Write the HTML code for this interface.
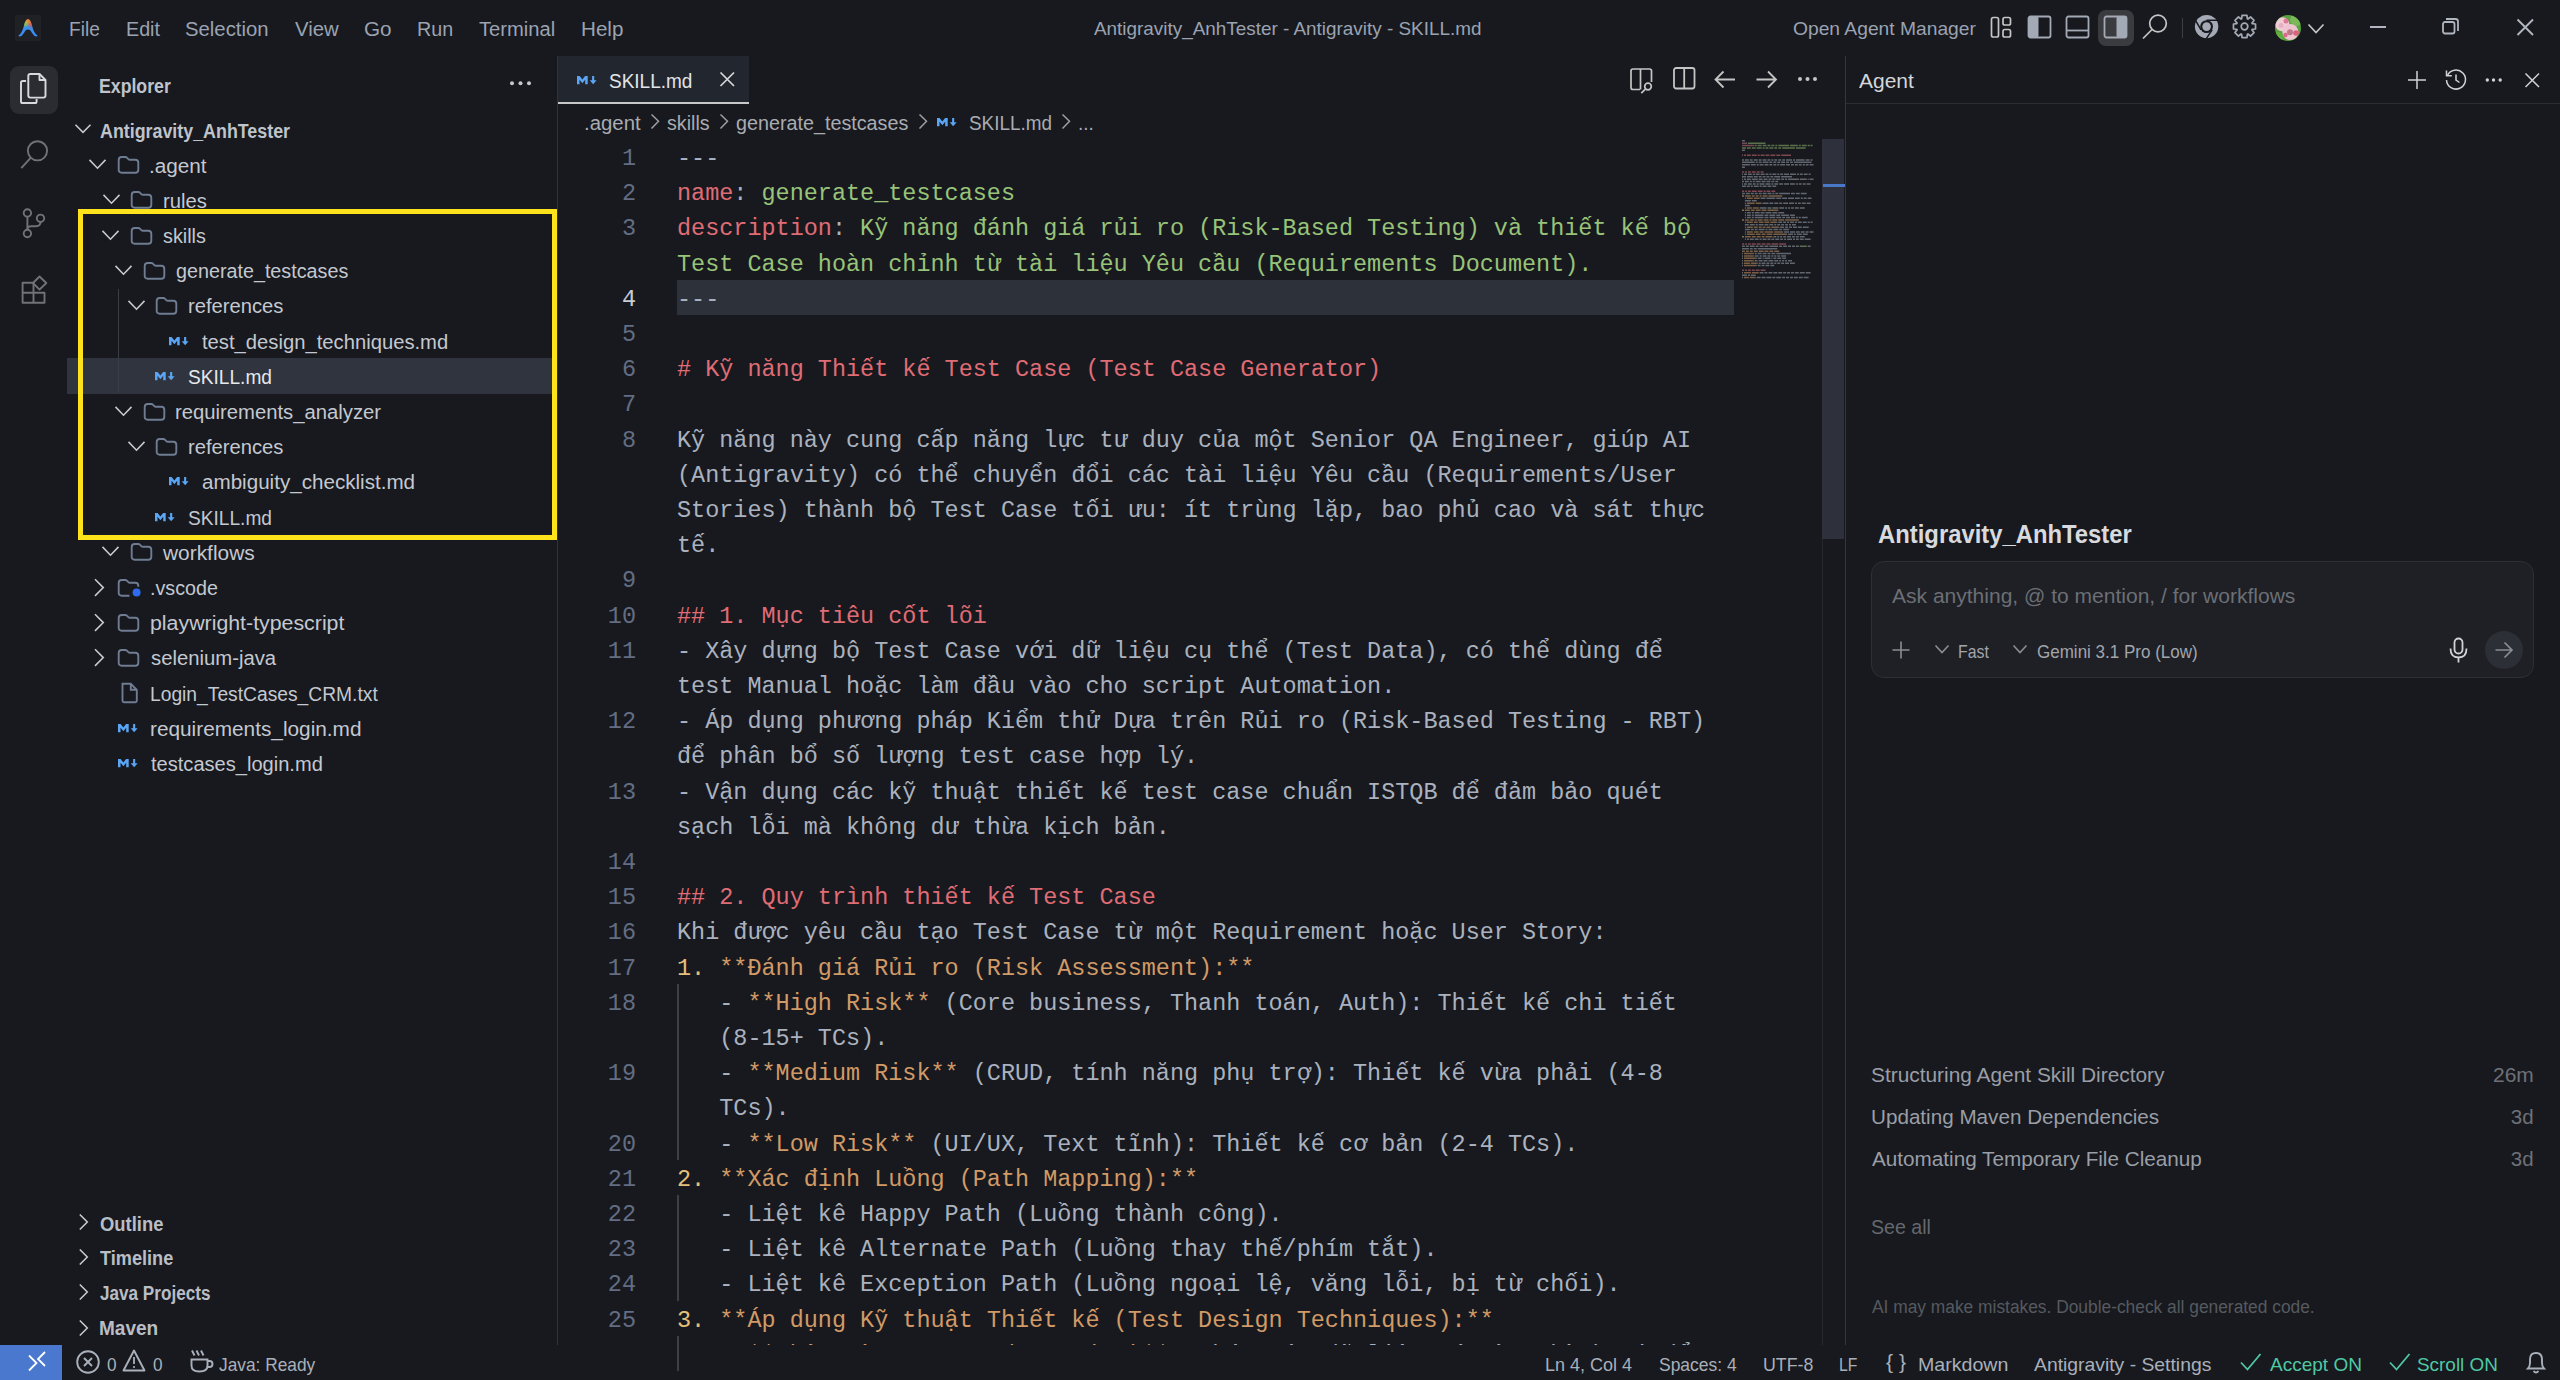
<!DOCTYPE html><html><head><meta charset="utf-8"><style>
*{box-sizing:border-box;margin:0;padding:0}
html,body{width:2560px;height:1380px;overflow:hidden;background:#17191e}
body{position:relative;font-family:"Liberation Sans",sans-serif;color:#cccccc}
.a{position:absolute;white-space:pre;line-height:24px}
svg{position:absolute;overflow:visible}
.menu{font-size:20px;color:#9ba3b2}
.tt{font-size:19px;color:#9ba3b2}
.tree{font-size:20px;color:#c4c8d0}
.bold{font-weight:700}
.chev{stroke:#c8cacf;stroke-width:1.55;fill:none}
.fold{stroke:#6f7c92;stroke-width:1.9;fill:none}
.ico{stroke:#c5c5c5;stroke-width:1.7;fill:none}
.code{font-family:"Liberation Mono",monospace;font-size:23.47px;line-height:35.2px;height:35.2px;color:#abb2bf;padding-top:1.8px}
.ln{font-family:"Liberation Mono",monospace;font-size:23.47px;line-height:35.2px;color:#636d83;width:100px;text-align:right;padding-top:1.8px}
.r{color:#e06c75}.g{color:#98c379}.y{color:#e5c07b}.o{color:#d19a66}.w{color:#abb2bf}
.st{font-size:18.5px;color:#aab0ba}
.bc{font-size:20px;color:#a9acb2}
.hist{font-size:20.5px;color:#9a9ea6}
</style></head><body>
<div class="a" style="left:15px;top:15px;width:26px;height:26px;background:#202125"></div>
<svg style="left:15px;top:15px" width="26" height="26" viewBox="0 0 26 26">
<defs><linearGradient id="lg" gradientUnits="userSpaceOnUse" x1="0" y1="4" x2="0" y2="22"><stop offset="0" stop-color="#f07038"/><stop offset=".2" stop-color="#d0a840"/><stop offset=".42" stop-color="#3a90e8"/><stop offset="1" stop-color="#3a8cff"/></linearGradient>
<radialGradient id="rg1" gradientUnits="userSpaceOnUse" cx="10" cy="8.5" r="4.5"><stop offset="0" stop-color="#90c840" stop-opacity=".9"/><stop offset="1" stop-color="#90c840" stop-opacity="0"/></radialGradient>
<radialGradient id="rg2" gradientUnits="userSpaceOnUse" cx="16.5" cy="9" r="5"><stop offset="0" stop-color="#f04050" stop-opacity=".85"/><stop offset="1" stop-color="#f04050" stop-opacity="0"/></radialGradient></defs>
<path d="M3.4 20.6 C6.5 18.7 8 14.5 9.3 9.5 C10.3 5.5 11.8 3.9 13 3.9 C14.2 3.9 15.7 5.5 16.7 9.5 C18 14.5 19.5 18.7 22.6 20.6 C22.1 21.7 20.6 21.7 19.6 21 C17.6 19.4 16.3 16.6 15 15.1 C14.2 14.2 11.8 14.2 11 15.1 C9.7 16.6 8.4 19.4 6.4 21 C5.4 21.7 3.9 21.7 3.4 20.6 Z" fill="url(#lg)"/><path d="M3.4 20.6 C6.5 18.7 8 14.5 9.3 9.5 C10.3 5.5 11.8 3.9 13 3.9 C14.2 3.9 15.7 5.5 16.7 9.5 C18 14.5 19.5 18.7 22.6 20.6 C22.1 21.7 20.6 21.7 19.6 21 C17.6 19.4 16.3 16.6 15 15.1 C14.2 14.2 11.8 14.2 11 15.1 C9.7 16.6 8.4 19.4 6.4 21 C5.4 21.7 3.9 21.7 3.4 20.6 Z" fill="url(#rg1)"/><path d="M3.4 20.6 C6.5 18.7 8 14.5 9.3 9.5 C10.3 5.5 11.8 3.9 13 3.9 C14.2 3.9 15.7 5.5 16.7 9.5 C18 14.5 19.5 18.7 22.6 20.6 C22.1 21.7 20.6 21.7 19.6 21 C17.6 19.4 16.3 16.6 15 15.1 C14.2 14.2 11.8 14.2 11 15.1 C9.7 16.6 8.4 19.4 6.4 21 C5.4 21.7 3.9 21.7 3.4 20.6 Z" fill="url(#rg2)"/>
</svg>
<div class="a menu" style="left:68.79px;top:17.00px;;transform:scaleX(0.9565);transform-origin:0 0">File</div>
<div class="a menu" style="left:125.51px;top:17.00px;;transform:scaleX(0.9853);transform-origin:0 0">Edit</div>
<div class="a menu" style="left:185.48px;top:17.00px;;transform:scaleX(1.0154);transform-origin:0 0">Selection</div>
<div class="a menu" style="left:295.00px;top:17.00px;;transform:scaleX(1.0174);transform-origin:0 0">View</div>
<div class="a menu" style="left:363.72px;top:17.00px;;transform:scaleX(1.0340);transform-origin:0 0">Go</div>
<div class="a menu" style="left:416.51px;top:17.00px;;transform:scaleX(0.9857);transform-origin:0 0">Run</div>
<div class="a menu" style="left:478.75px;top:17.00px;;transform:scaleX(1.0087);transform-origin:0 0">Terminal</div>
<div class="a menu" style="left:580.87px;top:17.00px;;transform:scaleX(1.0300);transform-origin:0 0">Help</div>
<div class="a tt" style="left:1094.40px;top:16.80px;;transform:scaleX(0.9943);transform-origin:0 0">Antigravity_AnhTester - Antigravity - SKILL.md</div>
<div class="a tt" style="left:1793.30px;top:16.70px;;transform:scaleX(1.0127);transform-origin:0 0">Open Agent Manager</div>
<svg style="left:1990px;top:16px" width="24" height="24"><g class="ico" stroke="#a3a9b5"><rect x="1.5" y="1.5" width="7" height="19.5" rx="1.8"/><rect x="13" y="1.5" width="7.5" height="7.5" rx="1.8"/><rect x="13" y="13.5" width="7.5" height="7.5" rx="1.8"/></g></svg>
<svg style="left:2027px;top:15px" width="26" height="26"><rect x="1.5" y="1.5" width="22" height="21" rx="2" fill="none" stroke="#a3a9b5" stroke-width="1.8"/><rect x="1.5" y="1.5" width="10" height="21" rx="2" fill="#a3a9b5"/></svg>
<svg style="left:2065px;top:15px" width="26" height="26"><rect x="1.5" y="1.5" width="22" height="21" rx="2" fill="none" stroke="#a3a9b5" stroke-width="1.8"/><line x1="1.5" y1="15.5" x2="23.5" y2="15.5" stroke="#a3a9b5" stroke-width="1.8"/></svg>
<div class="a" style="left:2098px;top:10px;width:36px;height:36px;border-radius:8px;background:#3a3b3f"></div>
<svg style="left:2103px;top:15px" width="26" height="26"><rect x="1.5" y="1.5" width="22" height="21" rx="2" fill="none" stroke="#a3a9b5" stroke-width="1.8"/><rect x="13.5" y="1.5" width="10" height="21" rx="2" fill="#a3a9b5"/></svg>
<svg style="left:2140px;top:13px" width="30" height="30"><circle cx="18" cy="10.5" r="8.3" class="ico" stroke="#a3a9b5"/><line x1="12" y1="16.5" x2="3" y2="25.5" class="ico" stroke="#a3a9b5" stroke-width="1.9"/></svg>
<div class="a" style="left:2182px;top:18px;width:1px;height:20px;background:#3b3e44"></div>
<svg style="left:2194px;top:14px" width="26" height="26" viewBox="0 0 26 26"><circle cx="12.6" cy="12.6" r="11.7" fill="#a3a9b5"/><circle cx="12.6" cy="12.6" r="6.4" fill="#17191e"/><circle cx="12.6" cy="12.6" r="4.3" fill="#a3a9b5"/>
<path d="M12.6 6.2 H24 M7.05 15.8 L1.5 6.3 M18.15 15.8 L12.3 24.6" stroke="#17191e" stroke-width="1.5"/></svg>
<svg style="left:2232px;top:14px" width="26" height="26"><polygon points="23.53,10.03 23.53,14.97 20.17,15.39 19.97,15.88 22.04,18.55 18.55,22.04 15.88,19.97 15.39,20.17 14.97,23.53 10.03,23.53 9.61,20.17 9.12,19.97 6.45,22.04 2.96,18.55 5.03,15.88 4.83,15.39 1.47,14.97 1.47,10.03 4.83,9.61 5.03,9.12 2.96,6.45 6.45,2.96 9.12,5.03 9.61,4.83 10.03,1.47 14.97,1.47 15.39,4.83 15.88,5.03 18.55,2.96 22.04,6.45 19.97,9.12 20.17,9.61" fill="none" stroke="#a3a9b5" stroke-width="1.7" stroke-linejoin="round"/><circle cx="12.5" cy="12.5" r="3.3" fill="none" stroke="#a3a9b5" stroke-width="1.7"/></svg>
<svg style="left:2275px;top:15px" width="26" height="26"><defs><clipPath id="avc"><circle cx="13" cy="13" r="13"/></clipPath></defs><g clip-path="url(#avc)"><rect width="26" height="26" fill="#5aa040"/><circle cx="21" cy="5" r="6" fill="#7cb858"/><circle cx="3" cy="22" r="5" fill="#62b040"/><circle cx="7.2" cy="9.2" r="7" fill="#f0ccd6"/><circle cx="6" cy="10.5" r="2.5" fill="#e6b0c0"/><circle cx="11" cy="6" r="2.5" fill="#e07898"/><circle cx="15.3" cy="17" r="8" fill="#efc4d0"/><circle cx="15" cy="17.3" r="3" fill="#c07888"/><circle cx="21" cy="18" r="2.8" fill="#dc6080"/><circle cx="10.5" cy="20" r="2.2" fill="#d86a88"/></g></svg>
<svg style="left:2306.5px;top:22.5px" width="18" height="12"><path d="M1.5 1.5 L9 9.5 L16.5 1.5" class="ico" stroke="#a3a9b5"/></svg>
<div class="a" style="left:2370px;top:26px;width:16px;height:2px;background:#b0b5bf"></div>
<svg style="left:2442px;top:18px" width="18" height="18"><rect x="1" y="4" width="11.5" height="11.5" rx="2" fill="none" stroke="#b0b5bf" stroke-width="1.8"/><path d="M4 1 H13.5 Q16 1 16 3.5 V13" fill="none" stroke="#b0b5bf" stroke-width="1.8"/></svg>
<svg style="left:2517px;top:19px" width="17" height="17"><path d="M0.5 0.5 L16 16 M16 0.5 L0.5 16" stroke="#b0b5bf" stroke-width="1.9"/></svg>
<div class="a" style="left:10px;top:66px;width:48px;height:48px;border-radius:9px;background:#2a2c31"></div>
<svg style="left:20px;top:73px" width="28" height="32"><g fill="none" stroke="#d7d9dd" stroke-width="1.9" stroke-linejoin="round"><path d="M6 8 H2.6 Q1 8 1 9.6 V28.4 Q1 30 2.6 30 H15 Q16.6 30 16.6 28.4 V26"/><path d="M8.3 3 Q8.3 1 10.3 1 H19.5 L25.5 7 V22.6 Q25.5 24.6 23.5 24.6 H10.3 Q8.3 24.6 8.3 22.6 Z"/><path d="M19.5 1.5 V7 H25"/></g></svg>
<svg style="left:20px;top:140px" width="30" height="32"><circle cx="17.5" cy="10.8" r="9.6" fill="none" stroke="#6f7276" stroke-width="1.9"/><line x1="10.6" y1="17.8" x2="1.3" y2="28.2" stroke="#6f7276" stroke-width="1.9"/></svg>
<svg style="left:20px;top:206px" width="30" height="34"><g fill="none" stroke="#6f7276" stroke-width="1.9"><circle cx="7.4" cy="7" r="3.7"/><circle cx="20.5" cy="12.3" r="3.7"/><circle cx="7.4" cy="27.5" r="3.7"/><path d="M7.4 10.7 V23.8"/><path d="M20.5 16 Q20.5 20.2 16 20.2 H11 Q7.4 20.2 7.4 23.5"/></g></svg>
<svg style="left:20px;top:274px" width="30" height="32"><g fill="none" stroke="#6f7276" stroke-width="1.9" stroke-linejoin="round"><path d="M2.6 8.7 H13.5 V28.8 H2.6 Z M2.6 18.7 H24.5 V28.8 H13.5"/><path d="M19.5 2.5 L26.3 9 L19.5 15.6 L13 9 Z"/></g></svg>
<div class="a tree bold" style="left:99.12px;top:73.50px;color:#bfc3cb;transform:scaleX(0.8844);transform-origin:0 0">Explorer</div>
<svg style="left:509px;top:80px" width="24" height="8"><circle cx="3" cy="3.2" r="2" fill="#c4c8d0"/><circle cx="11.5" cy="3.2" r="2" fill="#c4c8d0"/><circle cx="20" cy="3.2" r="2" fill="#c4c8d0"/></svg>
<svg style="left:74px;top:112px" width="20" height="36"><path class="chev" d="M1.5 12.8 L9 20.3 L16.5 12.8"/></svg>
<div class="a tree bold" style="left:99.50px;top:118.50px;color:#bfc3cb;transform:scaleX(0.8920);transform-origin:0 0">Antigravity_AnhTester</div>
<div class="a" style="left:67px;top:358.4px;width:490px;height:35.2px;background:#2f343e"></div>
<svg style="left:88.0px;top:147.2px" width="20" height="36"><path class="chev" d="M1.5 12.9 L9.5 21.2 L17.5 12.9"/></svg>
<svg style="left:116.5px;top:147.2px" width="24" height="36"><path class="fold" d="M4.7 25.7 Q1.7 25.7 1.7 22.7 V13 Q1.7 10 4.7 10 H8.3 Q9.3 10 10.1 10.8 L11.6 12.3 Q12.1 12.8 12.8 12.8 H18.3 Q21.3 12.8 21.3 15.8 V22.7 Q21.3 25.7 18.3 25.7 Z"/></svg>
<div class="a tree" style="left:148.96px;top:153.60px;;transform:scaleX(1.0364);transform-origin:0 0">.agent</div>
<svg style="left:101.8px;top:182.4px" width="20" height="36"><path class="chev" d="M1.5 12.9 L9.5 21.2 L17.5 12.9"/></svg>
<svg style="left:130.2px;top:182.4px" width="24" height="36"><path class="fold" d="M4.7 25.7 Q1.7 25.7 1.7 22.7 V13 Q1.7 10 4.7 10 H8.3 Q9.3 10 10.1 10.8 L11.6 12.3 Q12.1 12.8 12.8 12.8 H18.3 Q21.3 12.8 21.3 15.8 V22.7 Q21.3 25.7 18.3 25.7 Z"/></svg>
<div class="a tree" style="left:162.74px;top:188.80px;;transform:scaleX(1.0119);transform-origin:0 0">rules</div>
<svg style="left:101.0px;top:217.6px" width="20" height="36"><path class="chev" d="M1.5 12.9 L9.5 21.2 L17.5 12.9"/></svg>
<svg style="left:129.5px;top:217.6px" width="24" height="36"><path class="fold" d="M4.7 25.7 Q1.7 25.7 1.7 22.7 V13 Q1.7 10 4.7 10 H8.3 Q9.3 10 10.1 10.8 L11.6 12.3 Q12.1 12.8 12.8 12.8 H18.3 Q21.3 12.8 21.3 15.8 V22.7 Q21.3 25.7 18.3 25.7 Z"/></svg>
<div class="a tree" style="left:163.00px;top:224.00px;;transform:scaleX(0.9907);transform-origin:0 0">skills</div>
<svg style="left:114.1px;top:252.8px" width="20" height="36"><path class="chev" d="M1.5 12.9 L9.5 21.2 L17.5 12.9"/></svg>
<svg style="left:142.6px;top:252.8px" width="24" height="36"><path class="fold" d="M4.7 25.7 Q1.7 25.7 1.7 22.7 V13 Q1.7 10 4.7 10 H8.3 Q9.3 10 10.1 10.8 L11.6 12.3 Q12.1 12.8 12.8 12.8 H18.3 Q21.3 12.8 21.3 15.8 V22.7 Q21.3 25.7 18.3 25.7 Z"/></svg>
<div class="a tree" style="left:176.10px;top:259.20px;;transform:scaleX(0.9868);transform-origin:0 0">generate_testcases</div>
<svg style="left:126.6px;top:288.0px" width="20" height="36"><path class="chev" d="M1.5 12.9 L9.5 21.2 L17.5 12.9"/></svg>
<svg style="left:155.1px;top:288.0px" width="24" height="36"><path class="fold" d="M4.7 25.7 Q1.7 25.7 1.7 22.7 V13 Q1.7 10 4.7 10 H8.3 Q9.3 10 10.1 10.8 L11.6 12.3 Q12.1 12.8 12.8 12.8 H18.3 Q21.3 12.8 21.3 15.8 V22.7 Q21.3 25.7 18.3 25.7 Z"/></svg>
<div class="a tree" style="left:187.59px;top:294.40px;;transform:scaleX(1.0097);transform-origin:0 0">references</div>
<svg style="left:168.5px;top:336.5px" width="20" height="9"><path d="M0 8.3 V0 H2.6 L5.35 3.6 L8.1 0 H10.7 V8.3 H8.2 V3.8 L5.35 7.2 L2.5 3.8 V8.3 Z M15.1 0 H17.2 V4.3 H19.6 L16.15 8.3 L12.7 4.3 H15.1 Z" fill="#5aa5f5"/></svg>
<div class="a tree" style="left:201.70px;top:329.60px;;transform:scaleX(1.0111);transform-origin:0 0">test_design_techniques.md</div>
<svg style="left:155.4px;top:371.7px" width="20" height="9"><path d="M0 8.3 V0 H2.6 L5.35 3.6 L8.1 0 H10.7 V8.3 H8.2 V3.8 L5.35 7.2 L2.5 3.8 V8.3 Z M15.1 0 H17.2 V4.3 H19.6 L16.15 8.3 L12.7 4.3 H15.1 Z" fill="#5aa5f5"/></svg>
<div class="a tree" style="left:187.64px;top:364.80px;color:#e6e8ec;transform:scaleX(0.9558);transform-origin:0 0">SKILL.md</div>
<svg style="left:114.1px;top:393.6px" width="20" height="36"><path class="chev" d="M1.5 12.9 L9.5 21.2 L17.5 12.9"/></svg>
<svg style="left:142.6px;top:393.6px" width="24" height="36"><path class="fold" d="M4.7 25.7 Q1.7 25.7 1.7 22.7 V13 Q1.7 10 4.7 10 H8.3 Q9.3 10 10.1 10.8 L11.6 12.3 Q12.1 12.8 12.8 12.8 H18.3 Q21.3 12.8 21.3 15.8 V22.7 Q21.3 25.7 18.3 25.7 Z"/></svg>
<div class="a tree" style="left:175.09px;top:400.00px;;transform:scaleX(1.0128);transform-origin:0 0">requirements_analyzer</div>
<svg style="left:126.6px;top:428.8px" width="20" height="36"><path class="chev" d="M1.5 12.9 L9.5 21.2 L17.5 12.9"/></svg>
<svg style="left:155.1px;top:428.8px" width="24" height="36"><path class="fold" d="M4.7 25.7 Q1.7 25.7 1.7 22.7 V13 Q1.7 10 4.7 10 H8.3 Q9.3 10 10.1 10.8 L11.6 12.3 Q12.1 12.8 12.8 12.8 H18.3 Q21.3 12.8 21.3 15.8 V22.7 Q21.3 25.7 18.3 25.7 Z"/></svg>
<div class="a tree" style="left:187.59px;top:435.20px;;transform:scaleX(1.0097);transform-origin:0 0">references</div>
<svg style="left:168.5px;top:477.3px" width="20" height="9"><path d="M0 8.3 V0 H2.6 L5.35 3.6 L8.1 0 H10.7 V8.3 H8.2 V3.8 L5.35 7.2 L2.5 3.8 V8.3 Z M15.1 0 H17.2 V4.3 H19.6 L16.15 8.3 L12.7 4.3 H15.1 Z" fill="#5aa5f5"/></svg>
<div class="a tree" style="left:201.70px;top:470.40px;;transform:scaleX(1.0306);transform-origin:0 0">ambiguity_checklist.md</div>
<svg style="left:155.4px;top:512.5px" width="20" height="9"><path d="M0 8.3 V0 H2.6 L5.35 3.6 L8.1 0 H10.7 V8.3 H8.2 V3.8 L5.35 7.2 L2.5 3.8 V8.3 Z M15.1 0 H17.2 V4.3 H19.6 L16.15 8.3 L12.7 4.3 H15.1 Z" fill="#5aa5f5"/></svg>
<div class="a tree" style="left:187.64px;top:505.60px;;transform:scaleX(0.9558);transform-origin:0 0">SKILL.md</div>
<svg style="left:101.0px;top:534.4px" width="20" height="36"><path class="chev" d="M1.5 12.9 L9.5 21.2 L17.5 12.9"/></svg>
<svg style="left:129.5px;top:534.4px" width="24" height="36"><path class="fold" d="M4.7 25.7 Q1.7 25.7 1.7 22.7 V13 Q1.7 10 4.7 10 H8.3 Q9.3 10 10.1 10.8 L11.6 12.3 Q12.1 12.8 12.8 12.8 H18.3 Q21.3 12.8 21.3 15.8 V22.7 Q21.3 25.7 18.3 25.7 Z"/></svg>
<div class="a tree" style="left:163.00px;top:540.80px;;transform:scaleX(1.0443);transform-origin:0 0">workflows</div>
<svg style="left:90.8px;top:569.6px" width="18" height="36"><path class="chev" d="M4 9.3 L12.3 17.6 L4 25.9"/></svg>
<svg style="left:117.3px;top:569.6px" width="26" height="36"><path class="fold" d="M12.5 25.7 H4.7 Q1.7 25.7 1.7 22.7 V13 Q1.7 10 4.7 10 H8.3 Q9.3 10 10.1 10.8 L11.6 12.3 Q12.1 12.8 12.8 12.8 H18.3 Q21.3 12.8 21.3 15.8 V16.8"/><circle cx="19.6" cy="22.6" r="4" fill="#2f6bf0"/></svg>
<div class="a tree" style="left:149.81px;top:576.00px;;transform:scaleX(0.9853);transform-origin:0 0">.vscode</div>
<svg style="left:90.8px;top:604.8px" width="18" height="36"><path class="chev" d="M4 9.3 L12.3 17.6 L4 25.9"/></svg>
<svg style="left:117.3px;top:604.8px" width="24" height="36"><path class="fold" d="M4.7 25.7 Q1.7 25.7 1.7 22.7 V13 Q1.7 10 4.7 10 H8.3 Q9.3 10 10.1 10.8 L11.6 12.3 Q12.1 12.8 12.8 12.8 H18.3 Q21.3 12.8 21.3 15.8 V22.7 Q21.3 25.7 18.3 25.7 Z"/></svg>
<div class="a tree" style="left:149.73px;top:611.20px;;transform:scaleX(1.0665);transform-origin:0 0">playwright-typescript</div>
<svg style="left:90.8px;top:640.0px" width="18" height="36"><path class="chev" d="M4 9.3 L12.3 17.6 L4 25.9"/></svg>
<svg style="left:117.3px;top:640.0px" width="24" height="36"><path class="fold" d="M4.7 25.7 Q1.7 25.7 1.7 22.7 V13 Q1.7 10 4.7 10 H8.3 Q9.3 10 10.1 10.8 L11.6 12.3 Q12.1 12.8 12.8 12.8 H18.3 Q21.3 12.8 21.3 15.8 V22.7 Q21.3 25.7 18.3 25.7 Z"/></svg>
<div class="a tree" style="left:150.80px;top:646.40px;;transform:scaleX(1.0137);transform-origin:0 0">selenium-java</div>
<svg style="left:118.8px;top:675.2px" width="22" height="36"><path class="fold" d="M3.5 8.8 H11.8 L17.8 14.8 V25.8 Q17.8 27.3 16.3 27.3 H5 Q3.5 27.3 3.5 25.8 Z M11.8 9 V14.8 H17.6"/></svg>
<div class="a tree" style="left:149.84px;top:681.60px;;transform:scaleX(0.9619);transform-origin:0 0">Login_TestCases_CRM.txt</div>
<svg style="left:117.6px;top:723.7px" width="20" height="9"><path d="M0 8.3 V0 H2.6 L5.35 3.6 L8.1 0 H10.7 V8.3 H8.2 V3.8 L5.35 7.2 L2.5 3.8 V8.3 Z M15.1 0 H17.2 V4.3 H19.6 L16.15 8.3 L12.7 4.3 H15.1 Z" fill="#5aa5f5"/></svg>
<div class="a tree" style="left:149.76px;top:716.80px;;transform:scaleX(1.0396);transform-origin:0 0">requirements_login.md</div>
<svg style="left:117.6px;top:758.9px" width="20" height="9"><path d="M0 8.3 V0 H2.6 L5.35 3.6 L8.1 0 H10.7 V8.3 H8.2 V3.8 L5.35 7.2 L2.5 3.8 V8.3 Z M15.1 0 H17.2 V4.3 H19.6 L16.15 8.3 L12.7 4.3 H15.1 Z" fill="#5aa5f5"/></svg>
<div class="a tree" style="left:150.80px;top:752.00px;;transform:scaleX(1.0035);transform-origin:0 0">testcases_login.md</div>
<div class="a" style="left:118px;top:289px;width:1px;height:104.4px;background:#3a3d44"></div>
<div class="a" style="left:78px;top:209px;width:479px;height:331px;border:5px solid #fde21c"></div>
<svg style="left:76px;top:1204.0px" width="18" height="36"><path class="chev" d="M3.8 10.5 L11.3 18 L3.8 25.5"/></svg>
<div class="a tree bold" style="left:99.50px;top:1211.50px;color:#b9bdc5;transform:scaleX(0.9203);transform-origin:0 0">Outline</div>
<svg style="left:76px;top:1239.2px" width="18" height="36"><path class="chev" d="M3.8 10.5 L11.3 18 L3.8 25.5"/></svg>
<div class="a tree bold" style="left:99.50px;top:1246.20px;color:#b9bdc5;transform:scaleX(0.9074);transform-origin:0 0">Timeline</div>
<svg style="left:76px;top:1274.4px" width="18" height="36"><path class="chev" d="M3.8 10.5 L11.3 18 L3.8 25.5"/></svg>
<div class="a tree bold" style="left:99.50px;top:1281.20px;color:#b9bdc5;transform:scaleX(0.8566);transform-origin:0 0">Java Projects</div>
<svg style="left:76px;top:1309.6px" width="18" height="36"><path class="chev" d="M3.8 10.5 L11.3 18 L3.8 25.5"/></svg>
<div class="a tree bold" style="left:98.55px;top:1316.20px;color:#b9bdc5;transform:scaleX(0.9508);transform-origin:0 0">Maven</div>
<div class="a" style="left:557px;top:56px;width:1px;height:1289px;background:#303237"></div>
<div class="a" style="left:558px;top:56px;width:191px;height:48px;background:#22262e"></div>
<div class="a" style="left:558px;top:102px;width:191px;height:2px;background:#c8c8c8"></div>
<svg style="left:576.7px;top:75.8px" width="20" height="9"><path d="M0 8.3 V0 H2.6 L5.35 3.6 L8.1 0 H10.7 V8.3 H8.2 V3.8 L5.35 7.2 L2.5 3.8 V8.3 Z M15.1 0 H17.2 V4.3 H19.6 L16.15 8.3 L12.7 4.3 H15.1 Z" fill="#5aa5f5"/></svg>
<div class="a tree" style="left:608.85px;top:69.00px;color:#e2e4e8;transform:scaleX(0.9488);transform-origin:0 0">SKILL.md</div>
<svg style="left:719px;top:71px" width="17" height="17"><path d="M1.5 1.5 L15 15 M15 1.5 L1.5 15" stroke="#d6d8dc" stroke-width="1.7"/></svg>
<svg style="left:1630px;top:68px" width="26" height="26"><g fill="none" stroke="#c5c5c5" stroke-width="1.7"><path d="M10 21.5 H3 Q1 21.5 1 19.5 V3 Q1 1 3 1 H19.5 Q21.5 1 21.5 3 V14"/><path d="M10.5 1 V21.5"/><circle cx="18" cy="18.5" r="3.3"/><path d="M15.6 20.9 L11.3 25.2"/></g></svg>
<svg style="left:1673px;top:67px" width="24" height="24"><g fill="none" stroke="#c5c5c5" stroke-width="1.8"><rect x="1" y="1" width="20.5" height="20.5" rx="2.2"/><path d="M11.2 1 V21.5"/></g></svg>
<svg style="left:1714px;top:70px" width="24" height="20"><path d="M21 9.5 H1.8 M9.5 1.5 L1.5 9.5 L9.5 17.5" fill="none" stroke="#c5c5c5" stroke-width="1.8"/></svg>
<svg style="left:1756px;top:70px" width="24" height="20"><path d="M0.5 9.5 H19.7 M12 1.5 L20 9.5 L12 17.5" fill="none" stroke="#c5c5c5" stroke-width="1.8"/></svg>
<svg style="left:1797px;top:76px" width="24" height="8"><circle cx="3" cy="3" r="2" fill="#c5c5c5"/><circle cx="10.5" cy="3" r="2" fill="#c5c5c5"/><circle cx="18" cy="3" r="2" fill="#c5c5c5"/></svg>
<div class="a bc" style="left:583.78px;top:111.20px;;transform:scaleX(1.0182);transform-origin:0 0">.agent</div>
<svg style="left:650.0px;top:112.5px" width="12" height="22"><path d="M1.5 1.5 L8.5 8.3 L1.5 15.5" fill="none" stroke="#9ca0a6" stroke-width="1.5"/></svg>
<div class="a bc" style="left:667.00px;top:111.20px;;transform:scaleX(0.9826);transform-origin:0 0">skills</div>
<svg style="left:718.8px;top:112.5px" width="12" height="22"><path d="M1.5 1.5 L8.5 8.3 L1.5 15.5" fill="none" stroke="#9ca0a6" stroke-width="1.5"/></svg>
<div class="a bc" style="left:735.75px;top:111.20px;;transform:scaleX(0.9871);transform-origin:0 0">generate_testcases</div>
<svg style="left:917.5px;top:112.5px" width="12" height="22"><path d="M1.5 1.5 L8.5 8.3 L1.5 15.5" fill="none" stroke="#9ca0a6" stroke-width="1.5"/></svg>
<svg style="left:937px;top:118px" width="20" height="9"><path d="M0 8.3 V0 H2.6 L5.35 3.6 L8.1 0 H10.7 V8.3 H8.2 V3.8 L5.35 7.2 L2.5 3.8 V8.3 Z M15.1 0 H17.2 V4.3 H19.6 L16.15 8.3 L12.7 4.3 H15.1 Z" fill="#5aa5f5"/></svg>
<div class="a bc" style="left:968.56px;top:111.20px;;transform:scaleX(0.9448);transform-origin:0 0">SKILL.md</div>
<svg style="left:1061.0px;top:112.5px" width="12" height="22"><path d="M1.5 1.5 L8.5 8.3 L1.5 15.5" fill="none" stroke="#9ca0a6" stroke-width="1.5"/></svg>
<div class="a bc" style="left:1077.80px;top:111.20px;;transform:scaleX(0.9464);transform-origin:0 0">...</div>
<div class="a" style="left:677px;top:280.0px;width:1057px;height:35.2px;background:#2d3139"></div>
<div class="a" style="left:677px;top:984.0px;width:1.5px;height:35.2px;background:#3b3f46"></div>
<div class="a" style="left:677px;top:1019.2px;width:1.5px;height:35.2px;background:#3b3f46"></div>
<div class="a" style="left:677px;top:1054.4px;width:1.5px;height:35.2px;background:#3b3f46"></div>
<div class="a" style="left:677px;top:1089.6px;width:1.5px;height:35.2px;background:#3b3f46"></div>
<div class="a" style="left:677px;top:1124.8px;width:1.5px;height:35.2px;background:#3b3f46"></div>
<div class="a" style="left:677px;top:1195.2px;width:1.5px;height:35.2px;background:#3b3f46"></div>
<div class="a" style="left:677px;top:1230.4px;width:1.5px;height:35.2px;background:#3b3f46"></div>
<div class="a" style="left:677px;top:1265.6px;width:1.5px;height:35.2px;background:#3b3f46"></div>
<div class="a" style="left:677px;top:1336.0px;width:1.5px;height:35.2px;background:#3b3f46"></div>
<div class="a" style="left:558px;top:139.2px;width:1264px;height:1205.6px;overflow:hidden">
<div class="a ln" style="left:-22px;top:0.0px;">1</div>
<div class="a code" style="left:119px;top:0.0px"><span class="w">---</span></div>
<div class="a ln" style="left:-22px;top:35.2px;">2</div>
<div class="a code" style="left:119px;top:35.2px"><span class="r">name</span><span class="w">: </span><span class="g">generate_testcases</span></div>
<div class="a ln" style="left:-22px;top:70.4px;">3</div>
<div class="a code" style="left:119px;top:70.4px"><span class="r">description</span><span class="w">: </span><span class="g">Kỹ năng đánh giá rủi ro (Risk-Based Testing) và thiết kế bộ</span></div>
<div class="a code" style="left:119px;top:105.6px"><span class="g">Test Case hoàn chỉnh từ tài liệu Yêu cầu (Requirements Document).</span></div>
<div class="a ln" style="left:-22px;top:140.8px;color:#c8ccd4">4</div>
<div class="a code" style="left:119px;top:140.8px"><span class="w">---</span></div>
<div class="a ln" style="left:-22px;top:176.0px;">5</div>
<div class="a ln" style="left:-22px;top:211.2px;">6</div>
<div class="a code" style="left:119px;top:211.2px"><span class="r"># Kỹ năng Thiết kế Test Case (Test Case Generator)</span></div>
<div class="a ln" style="left:-22px;top:246.4px;">7</div>
<div class="a ln" style="left:-22px;top:281.6px;">8</div>
<div class="a code" style="left:119px;top:281.6px">Kỹ năng này cung cấp năng lực tư duy của một Senior QA Engineer, giúp AI</div>
<div class="a code" style="left:119px;top:316.8px">(Antigravity) có thể chuyển đổi các tài liệu Yêu cầu (Requirements/User</div>
<div class="a code" style="left:119px;top:352.0px">Stories) thành bộ Test Case tối ưu: ít trùng lặp, bao phủ cao và sát thực</div>
<div class="a code" style="left:119px;top:387.2px">tế.</div>
<div class="a ln" style="left:-22px;top:422.4px;">9</div>
<div class="a ln" style="left:-22px;top:457.6px;">10</div>
<div class="a code" style="left:119px;top:457.6px"><span class="r">## 1. Mục tiêu cốt lõi</span></div>
<div class="a ln" style="left:-22px;top:492.8px;">11</div>
<div class="a code" style="left:119px;top:492.8px">- Xây dựng bộ Test Case với dữ liệu cụ thể (Test Data), có thể dùng để</div>
<div class="a code" style="left:119px;top:528.0px">test Manual hoặc làm đầu vào cho script Automation.</div>
<div class="a ln" style="left:-22px;top:563.2px;">12</div>
<div class="a code" style="left:119px;top:563.2px">- Áp dụng phương pháp Kiểm thử Dựa trên Rủi ro (Risk-Based Testing - RBT)</div>
<div class="a code" style="left:119px;top:598.4px">để phân bổ số lượng test case hợp lý.</div>
<div class="a ln" style="left:-22px;top:633.6px;">13</div>
<div class="a code" style="left:119px;top:633.6px">- Vận dụng các kỹ thuật thiết kế test case chuẩn ISTQB để đảm bảo quét</div>
<div class="a code" style="left:119px;top:668.8px">sạch lỗi mà không dư thừa kịch bản.</div>
<div class="a ln" style="left:-22px;top:704.0px;">14</div>
<div class="a ln" style="left:-22px;top:739.2px;">15</div>
<div class="a code" style="left:119px;top:739.2px"><span class="r">## 2. Quy trình thiết kế Test Case</span></div>
<div class="a ln" style="left:-22px;top:774.4px;">16</div>
<div class="a code" style="left:119px;top:774.4px">Khi được yêu cầu tạo Test Case từ một Requirement hoặc User Story:</div>
<div class="a ln" style="left:-22px;top:809.6px;">17</div>
<div class="a code" style="left:119px;top:809.6px"><span class="y">1.</span> <span class="o">**Đánh giá Rủi ro (Risk Assessment):**</span></div>
<div class="a ln" style="left:-22px;top:844.8px;">18</div>
<div class="a code" style="left:119px;top:844.8px">   - <span class="o">**High Risk**</span> (Core business, Thanh toán, Auth): Thiết kế chi tiết</div>
<div class="a code" style="left:119px;top:880.0px">   (8-15+ TCs).</div>
<div class="a ln" style="left:-22px;top:915.2px;">19</div>
<div class="a code" style="left:119px;top:915.2px">   - <span class="o">**Medium Risk**</span> (CRUD, tính năng phụ trợ): Thiết kế vừa phải (4-8</div>
<div class="a code" style="left:119px;top:950.4px">   TCs).</div>
<div class="a ln" style="left:-22px;top:985.6px;">20</div>
<div class="a code" style="left:119px;top:985.6px">   - <span class="o">**Low Risk**</span> (UI/UX, Text tĩnh): Thiết kế cơ bản (2-4 TCs).</div>
<div class="a ln" style="left:-22px;top:1020.8px;">21</div>
<div class="a code" style="left:119px;top:1020.8px"><span class="y">2.</span> <span class="o">**Xác định Luồng (Path Mapping):**</span></div>
<div class="a ln" style="left:-22px;top:1056.0px;">22</div>
<div class="a code" style="left:119px;top:1056.0px">   - Liệt kê Happy Path (Luồng thành công).</div>
<div class="a ln" style="left:-22px;top:1091.2px;">23</div>
<div class="a code" style="left:119px;top:1091.2px">   - Liệt kê Alternate Path (Luồng thay thế/phím tắt).</div>
<div class="a ln" style="left:-22px;top:1126.4px;">24</div>
<div class="a code" style="left:119px;top:1126.4px">   - Liệt kê Exception Path (Luồng ngoại lệ, văng lỗi, bị từ chối).</div>
<div class="a ln" style="left:-22px;top:1161.6px;">25</div>
<div class="a code" style="left:119px;top:1161.6px"><span class="y">3.</span> <span class="o">**Áp dụng Kỹ thuật Thiết kế (Test Design Techniques):**</span></div>
<div class="a ln" style="left:-22px;top:1196.8px;">26</div>
<div class="a code" style="left:119px;top:1196.8px">   - <span class="o">**Phân vùng tương đương (EP)**</span>: Nhóm các dữ liệu có cùng hành vi để</div>
</div>
<svg style="left:0;top:0" width="2560" height="1380"><path d="M1742.0 140.0h2.9v1.5h-2.9zM1745.9 142.4h1.0v1.5h-1.0zM1752.8 144.8h1.0v1.5h-1.0zM1742.0 149.6h2.9v1.5h-2.9zM1742.0 159.2h2.0v1.5h-2.0zM1744.9 159.2h3.9v1.5h-3.9zM1749.8 159.2h2.9v1.5h-2.9zM1753.8 159.2h3.9v1.5h-3.9zM1758.7 159.2h2.9v1.5h-2.9zM1762.6 159.2h3.9v1.5h-3.9zM1767.5 159.2h2.9v1.5h-2.9zM1771.4 159.2h2.0v1.5h-2.0zM1774.3 159.2h2.9v1.5h-2.9zM1778.3 159.2h2.9v1.5h-2.9zM1782.2 159.2h2.9v1.5h-2.9zM1786.1 159.2h5.9v1.5h-5.9zM1793.0 159.2h2.0v1.5h-2.0zM1795.9 159.2h8.8v1.5h-8.8zM1805.7 159.2h3.9v1.5h-3.9zM1810.6 159.2h2.0v1.5h-2.0zM1742.0 161.6h12.7v1.5h-12.7zM1755.7 161.6h2.0v1.5h-2.0zM1758.7 161.6h2.9v1.5h-2.9zM1762.6 161.6h5.9v1.5h-5.9zM1769.4 161.6h2.9v1.5h-2.9zM1773.4 161.6h2.9v1.5h-2.9zM1777.3 161.6h2.9v1.5h-2.9zM1781.2 161.6h3.9v1.5h-3.9zM1786.1 161.6h2.9v1.5h-2.9zM1790.0 161.6h2.9v1.5h-2.9zM1793.9 161.6h17.6v1.5h-17.6zM1742.0 164.0h7.8v1.5h-7.8zM1750.8 164.0h4.9v1.5h-4.9zM1756.7 164.0h2.0v1.5h-2.0zM1759.6 164.0h3.9v1.5h-3.9zM1764.5 164.0h3.9v1.5h-3.9zM1769.4 164.0h2.9v1.5h-2.9zM1773.4 164.0h2.9v1.5h-2.9zM1777.3 164.0h2.0v1.5h-2.0zM1780.2 164.0h4.9v1.5h-4.9zM1786.1 164.0h3.9v1.5h-3.9zM1791.0 164.0h2.9v1.5h-2.9zM1794.9 164.0h2.9v1.5h-2.9zM1798.8 164.0h2.9v1.5h-2.9zM1802.8 164.0h2.0v1.5h-2.0zM1805.7 164.0h2.9v1.5h-2.9zM1809.6 164.0h3.9v1.5h-3.9zM1742.0 166.4h2.9v1.5h-2.9zM1742.0 173.6h1.0v1.5h-1.0zM1744.0 173.6h2.9v1.5h-2.9zM1747.9 173.6h3.9v1.5h-3.9zM1752.8 173.6h2.0v1.5h-2.0zM1755.7 173.6h3.9v1.5h-3.9zM1760.6 173.6h3.9v1.5h-3.9zM1765.5 173.6h2.9v1.5h-2.9zM1769.4 173.6h2.0v1.5h-2.0zM1772.4 173.6h3.9v1.5h-3.9zM1777.3 173.6h2.0v1.5h-2.0zM1780.2 173.6h2.9v1.5h-2.9zM1784.1 173.6h4.9v1.5h-4.9zM1790.0 173.6h5.9v1.5h-5.9zM1796.9 173.6h2.0v1.5h-2.0zM1799.8 173.6h2.9v1.5h-2.9zM1803.7 173.6h3.9v1.5h-3.9zM1808.6 173.6h2.0v1.5h-2.0zM1742.0 176.0h3.9v1.5h-3.9zM1746.9 176.0h5.9v1.5h-5.9zM1753.8 176.0h3.9v1.5h-3.9zM1758.7 176.0h2.9v1.5h-2.9zM1762.6 176.0h2.9v1.5h-2.9zM1766.5 176.0h2.9v1.5h-2.9zM1770.4 176.0h2.9v1.5h-2.9zM1774.3 176.0h5.9v1.5h-5.9zM1781.2 176.0h10.8v1.5h-10.8zM1742.0 178.4h1.0v1.5h-1.0zM1744.0 178.4h2.0v1.5h-2.0zM1746.9 178.4h3.9v1.5h-3.9zM1751.8 178.4h5.9v1.5h-5.9zM1758.7 178.4h3.9v1.5h-3.9zM1763.6 178.4h3.9v1.5h-3.9zM1768.5 178.4h2.9v1.5h-2.9zM1772.4 178.4h2.9v1.5h-2.9zM1776.3 178.4h3.9v1.5h-3.9zM1781.2 178.4h2.9v1.5h-2.9zM1785.1 178.4h2.0v1.5h-2.0zM1788.1 178.4h10.8v1.5h-10.8zM1799.8 178.4h6.9v1.5h-6.9zM1807.7 178.4h1.0v1.5h-1.0zM1809.6 178.4h3.9v1.5h-3.9zM1742.0 180.8h2.0v1.5h-2.0zM1744.9 180.8h3.9v1.5h-3.9zM1749.8 180.8h2.0v1.5h-2.0zM1752.8 180.8h2.0v1.5h-2.0zM1755.7 180.8h4.9v1.5h-4.9zM1761.6 180.8h3.9v1.5h-3.9zM1766.5 180.8h3.9v1.5h-3.9zM1771.4 180.8h2.9v1.5h-2.9zM1775.3 180.8h2.9v1.5h-2.9zM1742.0 183.2h1.0v1.5h-1.0zM1744.0 183.2h2.9v1.5h-2.9zM1747.9 183.2h3.9v1.5h-3.9zM1752.8 183.2h2.9v1.5h-2.9zM1756.7 183.2h2.0v1.5h-2.0zM1759.6 183.2h4.9v1.5h-4.9zM1765.5 183.2h4.9v1.5h-4.9zM1771.4 183.2h2.0v1.5h-2.0zM1774.3 183.2h3.9v1.5h-3.9zM1779.2 183.2h3.9v1.5h-3.9zM1784.1 183.2h4.9v1.5h-4.9zM1790.0 183.2h4.9v1.5h-4.9zM1795.9 183.2h2.0v1.5h-2.0zM1798.8 183.2h2.9v1.5h-2.9zM1802.8 183.2h2.9v1.5h-2.9zM1806.7 183.2h3.9v1.5h-3.9zM1742.0 185.6h3.9v1.5h-3.9zM1746.9 185.6h2.9v1.5h-2.9zM1750.8 185.6h2.0v1.5h-2.0zM1753.8 185.6h4.9v1.5h-4.9zM1759.6 185.6h2.0v1.5h-2.0zM1762.6 185.6h3.9v1.5h-3.9zM1767.5 185.6h3.9v1.5h-3.9zM1772.4 185.6h3.9v1.5h-3.9zM1742.0 192.8h2.9v1.5h-2.9zM1745.9 192.8h3.9v1.5h-3.9zM1750.8 192.8h2.9v1.5h-2.9zM1754.7 192.8h2.9v1.5h-2.9zM1758.7 192.8h2.9v1.5h-2.9zM1762.6 192.8h3.9v1.5h-3.9zM1767.5 192.8h3.9v1.5h-3.9zM1772.4 192.8h2.0v1.5h-2.0zM1775.3 192.8h2.9v1.5h-2.9zM1779.2 192.8h10.8v1.5h-10.8zM1791.0 192.8h3.9v1.5h-3.9zM1795.9 192.8h3.9v1.5h-3.9zM1800.8 192.8h5.9v1.5h-5.9zM1744.9 197.6h1.0v1.5h-1.0zM1760.6 197.6h4.9v1.5h-4.9zM1766.5 197.6h8.8v1.5h-8.8zM1776.3 197.6h4.9v1.5h-4.9zM1782.2 197.6h4.9v1.5h-4.9zM1788.1 197.6h5.9v1.5h-5.9zM1794.9 197.6h4.9v1.5h-4.9zM1800.8 197.6h2.0v1.5h-2.0zM1803.7 197.6h2.9v1.5h-2.9zM1807.7 197.6h3.9v1.5h-3.9zM1744.9 200.0h5.9v1.5h-5.9zM1751.8 200.0h4.9v1.5h-4.9zM1744.9 202.4h1.0v1.5h-1.0zM1762.6 202.4h5.9v1.5h-5.9zM1769.4 202.4h3.9v1.5h-3.9zM1774.3 202.4h3.9v1.5h-3.9zM1779.2 202.4h2.9v1.5h-2.9zM1783.2 202.4h4.9v1.5h-4.9zM1789.0 202.4h4.9v1.5h-4.9zM1794.9 202.4h2.0v1.5h-2.0zM1797.9 202.4h2.9v1.5h-2.9zM1801.8 202.4h3.9v1.5h-3.9zM1806.7 202.4h3.9v1.5h-3.9zM1744.9 204.8h4.9v1.5h-4.9zM1744.9 207.2h1.0v1.5h-1.0zM1759.6 207.2h6.9v1.5h-6.9zM1767.5 207.2h3.9v1.5h-3.9zM1772.4 207.2h5.9v1.5h-5.9zM1779.2 207.2h4.9v1.5h-4.9zM1785.1 207.2h2.0v1.5h-2.0zM1788.1 207.2h2.0v1.5h-2.0zM1791.0 207.2h2.9v1.5h-2.9zM1794.9 207.2h3.9v1.5h-3.9zM1799.8 207.2h4.9v1.5h-4.9zM1744.9 212.0h1.0v1.5h-1.0zM1746.9 212.0h3.9v1.5h-3.9zM1751.8 212.0h2.0v1.5h-2.0zM1754.7 212.0h4.9v1.5h-4.9zM1760.6 212.0h3.9v1.5h-3.9zM1765.5 212.0h5.9v1.5h-5.9zM1772.4 212.0h4.9v1.5h-4.9zM1778.3 212.0h5.9v1.5h-5.9zM1744.9 214.4h1.0v1.5h-1.0zM1746.9 214.4h3.9v1.5h-3.9zM1751.8 214.4h2.0v1.5h-2.0zM1754.7 214.4h8.8v1.5h-8.8zM1764.5 214.4h3.9v1.5h-3.9zM1769.4 214.4h5.9v1.5h-5.9zM1776.3 214.4h3.9v1.5h-3.9zM1781.2 214.4h7.8v1.5h-7.8zM1790.0 214.4h4.9v1.5h-4.9zM1744.9 216.8h1.0v1.5h-1.0zM1746.9 216.8h3.9v1.5h-3.9zM1751.8 216.8h2.0v1.5h-2.0zM1754.7 216.8h8.8v1.5h-8.8zM1764.5 216.8h3.9v1.5h-3.9zM1769.4 216.8h5.9v1.5h-5.9zM1776.3 216.8h4.9v1.5h-4.9zM1782.2 216.8h2.9v1.5h-2.9zM1786.1 216.8h3.9v1.5h-3.9zM1791.0 216.8h3.9v1.5h-3.9zM1795.9 216.8h2.0v1.5h-2.0zM1798.8 216.8h2.0v1.5h-2.0zM1801.8 216.8h5.9v1.5h-5.9zM1744.9 221.6h1.0v1.5h-1.0zM1776.3 221.6h1.0v1.5h-1.0zM1778.3 221.6h3.9v1.5h-3.9zM1783.2 221.6h2.9v1.5h-2.9zM1787.1 221.6h2.0v1.5h-2.0zM1790.0 221.6h3.9v1.5h-3.9zM1794.9 221.6h2.0v1.5h-2.0zM1797.9 221.6h3.9v1.5h-3.9zM1802.8 221.6h3.9v1.5h-3.9zM1807.7 221.6h2.0v1.5h-2.0zM1810.6 221.6h2.0v1.5h-2.0zM1744.9 224.0h3.9v1.5h-3.9zM1749.8 224.0h4.9v1.5h-4.9zM1755.7 224.0h2.0v1.5h-2.0zM1758.7 224.0h4.9v1.5h-4.9zM1764.5 224.0h3.9v1.5h-3.9zM1769.4 224.0h3.9v1.5h-3.9zM1774.3 224.0h2.0v1.5h-2.0zM1777.3 224.0h2.9v1.5h-2.9zM1781.2 224.0h2.9v1.5h-2.9zM1785.1 224.0h2.9v1.5h-2.9zM1789.0 224.0h2.0v1.5h-2.0zM1792.0 224.0h3.9v1.5h-3.9zM1744.9 226.4h1.0v1.5h-1.0zM1778.3 226.4h1.0v1.5h-1.0zM1780.2 226.4h3.9v1.5h-3.9zM1785.1 226.4h2.9v1.5h-2.9zM1789.0 226.4h2.9v1.5h-2.9zM1793.0 226.4h3.9v1.5h-3.9zM1797.9 226.4h3.9v1.5h-3.9zM1802.8 226.4h5.9v1.5h-5.9zM1744.9 228.8h4.9v1.5h-4.9zM1750.8 228.8h2.9v1.5h-2.9zM1754.7 228.8h2.9v1.5h-2.9zM1758.7 228.8h5.9v1.5h-5.9zM1765.5 228.8h2.0v1.5h-2.0zM1768.5 228.8h3.9v1.5h-3.9zM1773.4 228.8h4.9v1.5h-4.9zM1779.2 228.8h2.9v1.5h-2.9zM1783.2 228.8h5.9v1.5h-5.9zM1744.9 231.2h1.0v1.5h-1.0zM1782.2 231.2h1.0v1.5h-1.0zM1784.1 231.2h4.9v1.5h-4.9zM1790.0 231.2h4.9v1.5h-4.9zM1795.9 231.2h3.9v1.5h-3.9zM1800.8 231.2h3.9v1.5h-3.9zM1805.7 231.2h2.9v1.5h-2.9zM1809.6 231.2h3.9v1.5h-3.9zM1744.9 233.6h1.0v1.5h-1.0zM1786.1 233.6h1.0v1.5h-1.0zM1788.1 233.6h4.9v1.5h-4.9zM1793.9 233.6h2.0v1.5h-2.0zM1796.9 233.6h4.9v1.5h-4.9zM1802.8 233.6h4.9v1.5h-4.9zM1773.4 236.0h2.9v1.5h-2.9zM1777.3 236.0h2.0v1.5h-2.0zM1780.2 236.0h2.0v1.5h-2.0zM1783.2 236.0h2.9v1.5h-2.9zM1787.1 236.0h3.9v1.5h-3.9zM1792.0 236.0h2.9v1.5h-2.9zM1795.9 236.0h2.9v1.5h-2.9zM1799.8 236.0h4.9v1.5h-4.9zM1744.9 238.4h1.0v1.5h-1.0zM1746.9 238.4h2.0v1.5h-2.0zM1749.8 238.4h3.9v1.5h-3.9zM1754.7 238.4h3.9v1.5h-3.9zM1759.6 238.4h2.0v1.5h-2.0zM1762.6 238.4h3.9v1.5h-3.9zM1767.5 238.4h2.9v1.5h-2.9zM1771.4 238.4h2.9v1.5h-2.9zM1775.3 238.4h3.9v1.5h-3.9zM1780.2 238.4h2.9v1.5h-2.9zM1784.1 238.4h2.0v1.5h-2.0zM1787.1 238.4h4.9v1.5h-4.9zM1793.0 238.4h2.0v1.5h-2.0zM1795.9 238.4h2.9v1.5h-2.9zM1799.8 238.4h3.9v1.5h-3.9zM1804.7 238.4h5.9v1.5h-5.9zM1742.0 245.6h2.9v1.5h-2.9zM1745.9 245.6h2.9v1.5h-2.9zM1749.8 245.6h4.9v1.5h-4.9zM1755.7 245.6h2.9v1.5h-2.9zM1759.6 245.6h3.9v1.5h-3.9zM1764.5 245.6h3.9v1.5h-3.9zM1769.4 245.6h8.8v1.5h-8.8zM1779.2 245.6h2.9v1.5h-2.9zM1783.2 245.6h3.9v1.5h-3.9zM1788.1 245.6h2.9v1.5h-2.9zM1792.0 245.6h2.9v1.5h-2.9zM1795.9 245.6h2.9v1.5h-2.9zM1807.7 245.6h2.9v1.5h-2.9zM1742.0 248.0h6.9v1.5h-6.9zM1749.8 248.0h2.9v1.5h-2.9zM1753.8 248.0h2.9v1.5h-2.9zM1757.7 248.0h19.6v1.5h-19.6zM1742.0 252.8h1.0v1.5h-1.0zM1752.8 252.8h1.0v1.5h-1.0zM1754.7 252.8h2.0v1.5h-2.0zM1757.7 252.8h3.9v1.5h-3.9zM1762.6 252.8h3.9v1.5h-3.9zM1767.5 252.8h2.9v1.5h-2.9zM1771.4 252.8h3.9v1.5h-3.9zM1776.3 252.8h14.7v1.5h-14.7zM1742.0 255.2h1.0v1.5h-1.0zM1752.8 255.2h1.0v1.5h-1.0zM1754.7 255.2h3.9v1.5h-3.9zM1759.6 255.2h2.0v1.5h-2.0zM1762.6 255.2h3.9v1.5h-3.9zM1767.5 255.2h2.9v1.5h-2.9zM1771.4 255.2h2.0v1.5h-2.0zM1774.3 255.2h2.0v1.5h-2.0zM1777.3 255.2h2.9v1.5h-2.9zM1781.2 255.2h4.9v1.5h-4.9zM1742.0 257.6h1.0v1.5h-1.0zM1755.7 257.6h1.0v1.5h-1.0zM1757.7 257.6h3.9v1.5h-3.9zM1762.6 257.6h1.0v1.5h-1.0zM1764.5 257.6h5.9v1.5h-5.9zM1771.4 257.6h1.0v1.5h-1.0zM1773.4 257.6h2.9v1.5h-2.9zM1777.3 257.6h3.9v1.5h-3.9zM1782.2 257.6h3.9v1.5h-3.9zM1742.0 260.0h1.0v1.5h-1.0zM1752.8 260.0h1.0v1.5h-1.0zM1754.7 260.0h2.9v1.5h-2.9zM1758.7 260.0h3.9v1.5h-3.9zM1763.6 260.0h3.9v1.5h-3.9zM1768.5 260.0h4.9v1.5h-4.9zM1774.3 260.0h3.9v1.5h-3.9zM1779.2 260.0h2.0v1.5h-2.0zM1782.2 260.0h2.0v1.5h-2.0zM1785.1 260.0h2.0v1.5h-2.0zM1788.1 260.0h3.9v1.5h-3.9zM1742.0 262.4h1.0v1.5h-1.0zM1756.7 262.4h1.0v1.5h-1.0zM1758.7 262.4h2.0v1.5h-2.0zM1761.6 262.4h3.9v1.5h-3.9zM1766.5 262.4h2.9v1.5h-2.9zM1770.4 262.4h2.9v1.5h-2.9zM1774.3 262.4h2.0v1.5h-2.0zM1777.3 262.4h2.9v1.5h-2.9zM1781.2 262.4h2.9v1.5h-2.9zM1785.1 262.4h3.9v1.5h-3.9zM1790.0 262.4h4.9v1.5h-4.9zM1742.0 264.8h1.0v1.5h-1.0zM1755.7 264.8h1.0v1.5h-1.0zM1757.7 264.8h2.9v1.5h-2.9zM1761.6 264.8h2.9v1.5h-2.9zM1765.5 264.8h3.9v1.5h-3.9zM1770.4 264.8h3.9v1.5h-3.9zM1742.0 272.0h1.0v1.5h-1.0zM1759.6 272.0h3.9v1.5h-3.9zM1764.5 272.0h2.9v1.5h-2.9zM1768.5 272.0h3.9v1.5h-3.9zM1773.4 272.0h3.9v1.5h-3.9zM1778.3 272.0h3.9v1.5h-3.9zM1783.2 272.0h2.9v1.5h-2.9zM1787.1 272.0h2.9v1.5h-2.9zM1791.0 272.0h2.9v1.5h-2.9zM1794.9 272.0h3.9v1.5h-3.9zM1799.8 272.0h4.9v1.5h-4.9zM1805.7 272.0h4.9v1.5h-4.9zM1742.0 274.4h4.9v1.5h-4.9zM1747.9 274.4h2.0v1.5h-2.0zM1750.8 274.4h4.9v1.5h-4.9zM1742.0 276.8h1.0v1.5h-1.0zM1754.7 276.8h1.0v1.5h-1.0zM1756.7 276.8h3.9v1.5h-3.9zM1761.6 276.8h3.9v1.5h-3.9zM1766.5 276.8h4.9v1.5h-4.9zM1772.4 276.8h2.9v1.5h-2.9zM1776.3 276.8h4.9v1.5h-4.9zM1782.2 276.8h2.9v1.5h-2.9zM1786.1 276.8h2.9v1.5h-2.9zM1790.0 276.8h2.9v1.5h-2.9zM1793.9 276.8h3.9v1.5h-3.9zM1798.8 276.8h3.9v1.5h-3.9zM1803.7 276.8h4.9v1.5h-4.9z" fill="#9096a0" opacity=".62"/><path d="M1742.0 142.4h3.9v1.5h-3.9zM1742.0 144.8h10.8v1.5h-10.8zM1742.0 154.4h1.0v1.5h-1.0zM1744.0 154.4h2.0v1.5h-2.0zM1746.9 154.4h3.9v1.5h-3.9zM1751.8 154.4h4.9v1.5h-4.9zM1757.7 154.4h2.0v1.5h-2.0zM1760.6 154.4h3.9v1.5h-3.9zM1765.5 154.4h3.9v1.5h-3.9zM1770.4 154.4h4.9v1.5h-4.9zM1776.3 154.4h3.9v1.5h-3.9zM1781.2 154.4h9.8v1.5h-9.8zM1742.0 171.2h2.0v1.5h-2.0zM1744.9 171.2h2.0v1.5h-2.0zM1747.9 171.2h2.9v1.5h-2.9zM1751.8 171.2h3.9v1.5h-3.9zM1756.7 171.2h2.9v1.5h-2.9zM1760.6 171.2h2.9v1.5h-2.9zM1742.0 190.4h2.0v1.5h-2.0zM1744.9 190.4h2.0v1.5h-2.0zM1747.9 190.4h2.9v1.5h-2.9zM1751.8 190.4h4.9v1.5h-4.9zM1757.7 190.4h4.9v1.5h-4.9zM1763.6 190.4h2.0v1.5h-2.0zM1766.5 190.4h3.9v1.5h-3.9zM1771.4 190.4h3.9v1.5h-3.9zM1742.0 243.2h2.0v1.5h-2.0zM1744.9 243.2h2.0v1.5h-2.0zM1747.9 243.2h2.9v1.5h-2.9zM1751.8 243.2h3.9v1.5h-3.9zM1756.7 243.2h3.9v1.5h-3.9zM1761.6 243.2h3.9v1.5h-3.9zM1766.5 243.2h3.9v1.5h-3.9zM1771.4 243.2h6.9v1.5h-6.9zM1779.2 243.2h6.9v1.5h-6.9zM1742.0 269.6h2.0v1.5h-2.0zM1744.9 269.6h2.0v1.5h-2.0zM1747.9 269.6h2.9v1.5h-2.9zM1751.8 269.6h2.9v1.5h-2.9zM1755.7 269.6h3.9v1.5h-3.9zM1760.6 269.6h4.9v1.5h-4.9z" fill="#c0646e" opacity=".62"/><path d="M1747.9 142.4h17.6v1.5h-17.6zM1754.7 144.8h2.0v1.5h-2.0zM1757.7 144.8h3.9v1.5h-3.9zM1762.6 144.8h3.9v1.5h-3.9zM1767.5 144.8h2.9v1.5h-2.9zM1771.4 144.8h2.9v1.5h-2.9zM1775.3 144.8h2.0v1.5h-2.0zM1778.3 144.8h10.8v1.5h-10.8zM1790.0 144.8h7.8v1.5h-7.8zM1798.8 144.8h2.0v1.5h-2.0zM1801.8 144.8h4.9v1.5h-4.9zM1807.7 144.8h2.0v1.5h-2.0zM1810.6 144.8h2.0v1.5h-2.0zM1742.0 147.2h3.9v1.5h-3.9zM1746.9 147.2h3.9v1.5h-3.9zM1751.8 147.2h3.9v1.5h-3.9zM1756.7 147.2h4.9v1.5h-4.9zM1762.6 147.2h2.0v1.5h-2.0zM1765.5 147.2h2.9v1.5h-2.9zM1769.4 147.2h3.9v1.5h-3.9zM1774.3 147.2h2.9v1.5h-2.9zM1778.3 147.2h2.9v1.5h-2.9zM1782.2 147.2h12.7v1.5h-12.7zM1795.9 147.2h9.8v1.5h-9.8zM1799.8 245.6h6.9v1.5h-6.9z" fill="#88a868" opacity=".62"/><path d="M1742.0 195.2h2.0v1.5h-2.0zM1742.0 209.6h2.0v1.5h-2.0zM1742.0 219.2h2.0v1.5h-2.0zM1742.0 236.0h2.0v1.5h-2.0z" fill="#c8a868" opacity=".62"/><path d="M1744.9 195.2h5.9v1.5h-5.9zM1751.8 195.2h2.9v1.5h-2.9zM1755.7 195.2h2.9v1.5h-2.9zM1759.6 195.2h2.0v1.5h-2.0zM1762.6 195.2h4.9v1.5h-4.9zM1768.5 195.2h13.7v1.5h-13.7zM1746.9 197.6h5.9v1.5h-5.9zM1753.8 197.6h5.9v1.5h-5.9zM1746.9 202.4h7.8v1.5h-7.8zM1755.7 202.4h5.9v1.5h-5.9zM1746.9 207.2h4.9v1.5h-4.9zM1752.8 207.2h5.9v1.5h-5.9zM1744.9 209.6h4.9v1.5h-4.9zM1750.8 209.6h3.9v1.5h-3.9zM1755.7 209.6h4.9v1.5h-4.9zM1761.6 209.6h4.9v1.5h-4.9zM1767.5 209.6h10.8v1.5h-10.8zM1744.9 219.2h3.9v1.5h-3.9zM1749.8 219.2h3.9v1.5h-3.9zM1754.7 219.2h2.0v1.5h-2.0zM1757.7 219.2h4.9v1.5h-4.9zM1763.6 219.2h4.9v1.5h-4.9zM1769.4 219.2h2.0v1.5h-2.0zM1772.4 219.2h4.9v1.5h-4.9zM1778.3 219.2h5.9v1.5h-5.9zM1785.1 219.2h13.7v1.5h-13.7zM1746.9 221.6h5.9v1.5h-5.9zM1753.8 221.6h3.9v1.5h-3.9zM1758.7 221.6h4.9v1.5h-4.9zM1764.5 221.6h4.9v1.5h-4.9zM1770.4 221.6h5.9v1.5h-5.9zM1746.9 226.4h5.9v1.5h-5.9zM1753.8 226.4h3.9v1.5h-3.9zM1758.7 226.4h2.9v1.5h-2.9zM1762.6 226.4h2.9v1.5h-2.9zM1766.5 226.4h3.9v1.5h-3.9zM1771.4 226.4h6.9v1.5h-6.9zM1746.9 231.2h5.9v1.5h-5.9zM1753.8 231.2h4.9v1.5h-4.9zM1759.6 231.2h3.9v1.5h-3.9zM1764.5 231.2h8.8v1.5h-8.8zM1774.3 231.2h7.8v1.5h-7.8zM1746.9 233.6h7.8v1.5h-7.8zM1755.7 233.6h4.9v1.5h-4.9zM1761.6 233.6h3.9v1.5h-3.9zM1766.5 233.6h5.9v1.5h-5.9zM1773.4 233.6h12.7v1.5h-12.7zM1744.9 236.0h5.9v1.5h-5.9zM1751.8 236.0h3.9v1.5h-3.9zM1756.7 236.0h3.9v1.5h-3.9zM1761.6 236.0h2.9v1.5h-2.9zM1765.5 236.0h6.9v1.5h-6.9zM1742.0 250.4h2.9v1.5h-2.9zM1745.9 250.4h2.9v1.5h-2.9zM1749.8 250.4h2.9v1.5h-2.9zM1753.8 250.4h3.9v1.5h-3.9zM1758.7 250.4h4.9v1.5h-4.9zM1764.5 250.4h3.9v1.5h-3.9zM1769.4 250.4h3.9v1.5h-3.9zM1774.3 250.4h4.9v1.5h-4.9zM1744.0 252.8h8.8v1.5h-8.8zM1744.0 255.2h8.8v1.5h-8.8zM1744.0 257.6h11.8v1.5h-11.8zM1744.0 260.0h8.8v1.5h-8.8zM1744.0 262.4h5.9v1.5h-5.9zM1750.8 262.4h5.9v1.5h-5.9zM1744.0 264.8h11.8v1.5h-11.8zM1744.0 272.0h6.9v1.5h-6.9zM1751.8 272.0h6.9v1.5h-6.9zM1744.0 276.8h4.9v1.5h-4.9zM1749.8 276.8h4.9v1.5h-4.9z" fill="#b88a5e" opacity=".62"/></svg>
<div class="a" style="left:1822px;top:139px;width:1px;height:1206px;background:#25272c"></div>
<div class="a" style="left:1822px;top:139px;width:22px;height:400px;background:#2e313b"></div>
<div class="a" style="left:1823px;top:184px;width:22px;height:3px;background:#4a78c8"></div>
<div class="a" style="left:1845px;top:56px;width:1px;height:1289px;background:#34363c"></div>
<div class="a" style="left:1846px;top:103px;width:714px;height:1px;background:#2a2d33"></div>
<div class="a tree" style="left:1858.80px;top:68.90px;font-size:20.5px;color:#d4d6da;transform:scaleX(1.0241);transform-origin:0 0">Agent</div>
<svg style="left:2407.8px;top:71px" width="18" height="18"><path d="M9 0 V18 M0 9 H18" stroke="#d0d2d6" stroke-width="1.5"/></svg>
<svg style="left:2444px;top:68px" width="24" height="24"><g fill="none" stroke="#d0d2d6" stroke-width="1.5"><path d="M3.4 7.5 A9.5 9.5 0 1 1 2.5 12"/><path d="M2.5 2.5 V7.8 H7.8"/><path d="M12 6.5 V12 L15.5 14.5"/></g></svg>
<svg style="left:2484px;top:77px" width="22" height="8"><circle cx="3.3" cy="3" r="1.7" fill="#d0d2d6"/><circle cx="9.5" cy="3" r="1.7" fill="#d0d2d6"/><circle cx="16.2" cy="3" r="1.7" fill="#d0d2d6"/></svg>
<svg style="left:2524.5px;top:72.5px" width="15" height="15"><path d="M0.5 0.5 L14 14 M14 0.5 L0.5 14" stroke="#d0d2d6" stroke-width="1.5"/></svg>
<div class="a bold" style="left:1878.00px;top:522.30px;font-size:26px;color:#d8dade;transform:scaleX(0.9166);transform-origin:0 0">Antigravity_AnhTester</div>
<div class="a" style="left:1871px;top:561px;width:663px;height:117px;border-radius:13px;background:#1e2026;border:1.5px solid #2c2f36"></div>
<div class="a " style="left:1892.00px;top:583.90px;font-size:20.5px;color:#6c6f75;transform:scaleX(1.0254);transform-origin:0 0">Ask anything, @ to mention, / for workflows</div>
<svg style="left:1891px;top:640px" width="20" height="20"><path d="M10 1.5 V18.5 M1.5 10 H18.5" stroke="#8a8d93" stroke-width="1.6"/></svg>
<svg style="left:1934px;top:644px" width="16" height="12"><path d="M1.5 1.5 L8 8.5 L14.5 1.5" fill="none" stroke="#8a8d93" stroke-width="1.6"/></svg>
<div class="a " style="left:1958.17px;top:639.70px;font-size:19px;color:#a2a5ab;transform:scaleX(0.8333);transform-origin:0 0">Fast</div>
<svg style="left:2012px;top:644px" width="16" height="12"><path d="M1.5 1.5 L8 8.5 L14.5 1.5" fill="none" stroke="#8a8d93" stroke-width="1.6"/></svg>
<div class="a " style="left:2036.90px;top:639.70px;font-size:19px;color:#a2a5ab;transform:scaleX(0.8950);transform-origin:0 0">Gemini 3.1 Pro (Low)</div>
<svg style="left:2447px;top:637px" width="24" height="28"><g fill="none" stroke="#d0d2d6" stroke-width="1.8"><rect x="7.5" y="1.5" width="8" height="15" rx="4"/><path d="M3.5 11.5 Q3.5 20.5 11.5 20.5 Q19.5 20.5 19.5 11.5 M11.5 20.5 V25.5"/></g></svg>
<div class="a" style="left:2485px;top:631px;width:38px;height:38px;border-radius:19px;background:#2c2f35"></div>
<svg style="left:2494px;top:640px" width="20" height="20"><path d="M1.5 10 H18 M10.5 2.5 L18 10 L10.5 17.5" fill="none" stroke="#8a8d93" stroke-width="1.7"/></svg>
<div class="a hist" style="left:1870.58px;top:1063.20px;;transform:scaleX(1.0181);transform-origin:0 0">Structuring Agent Skill Directory</div>
<div class="a hist" style="left:2492.88px;top:1063.20px;color:#6e7177;transform:scaleX(1.0237);transform-origin:0 0">26m</div>
<div class="a hist" style="left:1870.59px;top:1105.00px;;transform:scaleX(1.0074);transform-origin:0 0">Updating Maven Dependencies</div>
<div class="a hist" style="left:2510.80px;top:1105.00px;color:#6e7177">3d</div>
<div class="a hist" style="left:1871.60px;top:1147.20px;;transform:scaleX(1.0098);transform-origin:0 0">Automating Temporary File Cleanup</div>
<div class="a hist" style="left:2510.80px;top:1147.20px;color:#6e7177">3d</div>
<div class="a hist" style="left:1870.64px;top:1215.10px;color:#65686e;transform:scaleX(0.9557);transform-origin:0 0">See all</div>
<div class="a " style="left:1871.60px;top:1295.20px;font-size:18px;color:#56595f;transform:scaleX(0.9640);transform-origin:0 0">AI may make mistakes. Double-check all generated code.</div>
<div class="a" style="left:0;top:1345px;width:62px;height:35px;background:#4a78cf"></div>
<svg style="left:27px;top:1350px" width="20" height="24"><path d="M2 20.5 L9.5 13 L2 5.5 M18 2 L11 9 L18 16" fill="none" stroke="#ffffff" stroke-width="1.8"/></svg>
<svg style="left:76px;top:1350px" width="24" height="24"><circle cx="12" cy="12" r="10.8" fill="none" stroke="#aab0ba" stroke-width="1.9"/><path d="M8 8 L16 16 M16 8 L8 16" stroke="#aab0ba" stroke-width="1.9"/></svg>
<div class="a st" style="left:106.50px;top:1353.00px;;transform:scaleX(0.9300);transform-origin:0 0">0</div>
<svg style="left:122px;top:1349px" width="26" height="24"><path d="M12 1.5 L22.5 21.5 H1.5 Z" fill="none" stroke="#aab0ba" stroke-width="1.9" stroke-linejoin="round"/><path d="M12 8 V15" stroke="#aab0ba" stroke-width="1.8"/><circle cx="12" cy="18" r="1.1" fill="#aab0ba"/></svg>
<div class="a st" style="left:153.00px;top:1353.00px;;transform:scaleX(0.9300);transform-origin:0 0">0</div>
<svg style="left:190px;top:1350px" width="26" height="26"><g fill="none" stroke="#aab0ba" stroke-width="1.9"><path d="M1.5 9.5 H17.5 V15.5 Q17.5 21.5 9.5 21.5 Q1.5 21.5 1.5 15.5 Z"/><path d="M17.5 11 H19.5 Q22.5 11 22.5 14 Q22.5 17 19.5 17 H17"/><path d="M2 0.5 L4.5 5.5 M6.5 0.5 L9 5.5 M11 0.5 L13.5 5.5"/></g></svg>
<div class="a st" style="left:219.10px;top:1353.00px;;transform:scaleX(0.9350);transform-origin:0 0">Java: Ready</div>
<div class="a st" style="left:1545.03px;top:1353.00px;;transform:scaleX(0.9719);transform-origin:0 0">Ln 4, Col 4</div>
<div class="a st" style="left:1658.96px;top:1353.00px;;transform:scaleX(0.9444);transform-origin:0 0">Spaces: 4</div>
<div class="a st" style="left:1762.84px;top:1353.00px;;transform:scaleX(0.9608);transform-origin:0 0">UTF-8</div>
<div class="a st" style="left:1838.75px;top:1353.00px;;transform:scaleX(0.8500);transform-origin:0 0">LF</div>
<div class="a st" style="left:1917.94px;top:1353.00px;;transform:scaleX(1.0595);transform-origin:0 0">Markdown</div>
<div class="a st" style="left:2034.30px;top:1353.00px;;transform:scaleX(1.0453);transform-origin:0 0">Antigravity - Settings</div>
<div class="a st" style="left:2269.60px;top:1353.00px;color:#50c8a4;transform:scaleX(1.0273);transform-origin:0 0">Accept ON</div>
<div class="a st" style="left:2416.68px;top:1353.00px;color:#50c8a4;transform:scaleX(1.0221);transform-origin:0 0">Scroll ON</div>
<div class="a st" style="left:1885.90px;top:1350.00px;font-size:21px;transform:scaleX(1.0050);transform-origin:0 0">{ }</div>
<svg style="left:2240px;top:1353px" width="22" height="20"><path d="M1 9.5 L7.5 16.5 L20.5 1" fill="none" stroke="#50c8a4" stroke-width="1.8"/></svg>
<svg style="left:2389px;top:1353px" width="22" height="20"><path d="M1 9.5 L7.5 16.5 L20.5 1" fill="none" stroke="#50c8a4" stroke-width="1.8"/></svg>
<svg style="left:2525px;top:1350px" width="24" height="26"><g fill="none" stroke="#aab0ba" stroke-width="1.9"><path d="M3 18.5 Q5 16.5 5 13 V9.5 Q5 3 11 3 Q17 3 17 9.5 V13 Q17 16.5 19 18.5 Z"/><path d="M8.5 21 Q11 24 13.5 21"/></g></svg>
</body></html>
